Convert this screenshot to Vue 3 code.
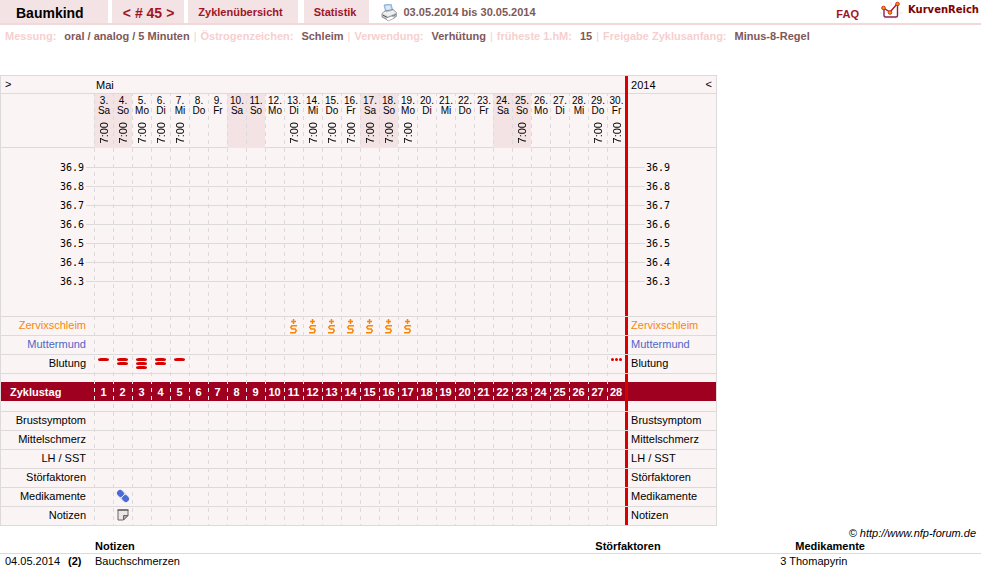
<script setup>
const weekdays = ['Sa', 'So', 'Mo', 'Di', 'Mi', 'Do', 'Fr']
const timed = [1, 2, 3, 4, 5, 11, 12, 13, 14, 15, 16, 17, 23, 27, 28]
const bleeding = { 1: 1, 2: 2, 3: 3, 4: 2, 5: 1 }

const days = Array.from({ length: 28 }, (_, i) => ({
  cycle: i + 1,
  date: i + 3,
  weekday: weekdays[i % 7],
  weekend: i % 7 < 2,
  time: timed.includes(i + 1) ? '7:00' : '',
  mucus: i + 1 >= 11 && i + 1 <= 17,
  bars: bleeding[i + 1] || 0,
  spotting: i + 1 === 28
}))

const temperatures = ['36.9', '36.8', '36.7', '36.6', '36.5', '36.4', '36.3']

const upperRows = [
  { label: 'Zervixschleim', kind: 'mucus' },
  { label: 'Muttermund', kind: 'cervix' },
  { label: 'Blutung', kind: 'bleeding' }
]
const lowerRows = [
  { label: 'Brustsymptom', kind: 'plain' },
  { label: 'Mittelschmerz', kind: 'plain' },
  { label: 'LH / SST', kind: 'plain' },
  { label: 'Störfaktoren', kind: 'plain' },
  { label: 'Medikamente', kind: 'pill' },
  { label: 'Notizen', kind: 'note' }
]

const settings = [
  { name: 'Messung:', value: 'oral / analog / 5 Minuten' },
  { name: 'Östrogenzeichen:', value: 'Schleim' },
  { name: 'Verwendung:', value: 'Verhütung' },
  { name: 'früheste 1.hM:', value: '15' },
  { name: 'Freigabe Zyklusanfang:', value: 'Minus-8-Regel' }
]
</script>

<template>
  <div class="page">
    <header class="top">
      <nav class="nav">
        <a class="tab user" href="#">Baumkind</a>
        <span class="tab cycle"><a href="#">&lt;</a> # 45 <a href="#">&gt;</a></span>
        <a class="tab overview" href="#">Zyklenübersicht</a>
        <a class="tab stats" href="#">Statistik</a>
      </nav>
      <button class="print" type="button" aria-label="Drucken">
        <svg width="16" height="18" viewBox="0 0 16 18">
          <path d="M3 1 10 0l2 7-7 2z" fill="#a9cdf0" stroke="#7e9cc0" stroke-width=".7" />
          <path d="M4.3 2.2l4.7-.6 1.4 5-4.4 1z" fill="#d8ebfc" />
          <path d="M1 9.5 4 7l8-1.5 3.3 3v4L7 16.3 1 13z" fill="#c9cbd0" stroke="#777b82" stroke-width=".8" />
          <path d="M1.3 9.6 7 12.2l8-3.4-3-2.6-1 .9-5.6 1.4-1-1z" fill="#eef0f2" />
          <path d="M2 11.2 7 13.8l7.6-3.2" fill="none" stroke="#555a60" stroke-width="1" />
          <path d="M4.5 14.3 11 12l3 1.8L7.2 17z" fill="#fff" stroke="#888" stroke-width=".6" />
          <path d="M11.8 11.5h1.6" stroke="#62b53c" stroke-width="1.2" />
        </svg>
      </button>
      <span class="range">03.05.2014 bis 30.05.2014</span>
      <a class="faq" href="#">FAQ</a>
      <a class="brand" href="#">
        <svg width="23" height="18" viewBox="0 0 23 18">
          <path d="M2 12H0M18.500 12H23M4 17.500h1M11 17.500h1M15 17.500h1M11 1v4" stroke="#e8e4e8" />
          <path d="M4 7v7.500q0 1.500 1.500 1.500h10.500q1.500 0 1.500-1.500V4" fill="none" stroke="#8f1f4c" stroke-width="1.400" />
          <path d="M3.500 7l6.500 4 7-8" fill="none" stroke="#a81a30" stroke-width="1.400" />
          <circle cx="3.500" cy="7" r="1.800" fill="#f79a00" stroke="#c8321c" />
          <circle cx="10" cy="11.500" r="1.800" fill="#f79a00" stroke="#c8321c" />
          <circle cx="17.500" cy="3" r="1.800" fill="#f79a00" stroke="#c8321c" />
        </svg>
        <span>KurvenReich</span>
      </a>
    </header>

    <div class="settings">
      <template v-for="(s, i) in settings" :key="s.name">
        <span v-if="i" class="bar">|</span>
        <span class="name">{{ s.name }}</span>
        <span class="value">{{ s.value }}</span>
      </template>
    </div>

    <div class="chart">
      <table class="grid">
        <colgroup>
          <col class="c-label" />
          <col v-for="d in days" :key="d.cycle" :class="d.cycle === 28 ? 'c-last' : 'c-day'" />
          <col class="c-right" />
        </colgroup>
        <tbody>
          <tr class="month">
            <td class="prev"><a href="#">&gt;</a></td>
            <td class="month-name" colspan="28">Mai</td>
            <td class="right over">
              <span class="year"><span>2014</span><a class="next" href="#">&lt;</a></span>
            </td>
          </tr>
          <tr class="dates">
            <td></td>
            <td v-for="d in days" :key="d.cycle" :class="{ weekend: d.weekend }">
              <div class="date">
                <span>{{ d.date }}.</span>
                <span>{{ d.weekday }}</span>
                <span class="time">{{ d.time }}</span>
              </div>
            </td>
            <td class="right over"></td>
          </tr>
          <tr class="pad-top">
            <td colspan="29"></td>
            <td class="right plain"></td>
          </tr>
          <tr v-for="t in temperatures" :key="t" class="temp">
            <th scope="row">{{ t }}</th>
            <td colspan="28"></td>
            <td class="right">{{ t }}</td>
          </tr>
          <tr class="pad-bottom">
            <td colspan="29"></td>
            <td class="right"></td>
          </tr>
          <tr v-for="r in upperRows" :key="r.label" class="row" :class="r.kind">
            <th scope="row">{{ r.label }}</th>
            <td v-for="d in days" :key="d.cycle">
              <span v-if="r.kind === 'mucus' && d.mucus" class="mark">
                <svg width="9" height="15" viewBox="0 0 9 15">
                  <path d="M2 2.500h5M4.500 0v5M8 6.750H3L1.750 8.250 3 10H6.250L7.250 11.750 6 13.750H1" fill="none" stroke="#f98500" stroke-width="1.500" />
                </svg>
              </span>
              <span v-if="r.kind === 'bleeding' && d.bars" class="bars">
                <i v-for="n in d.bars" :key="n"></i>
              </span>
              <span v-if="r.kind === 'bleeding' && d.spotting" class="dots"><i></i><i></i><i></i></span>
            </td>
            <td class="right">{{ r.label }}</td>
          </tr>
          <tr class="gap-a">
            <td colspan="29"></td>
            <td class="right plain"></td>
          </tr>
          <tr class="band">
            <th scope="row">Zyklustag</th>
            <td v-for="d in days" :key="d.cycle">{{ d.cycle }}</td>
            <td class="right"></td>
          </tr>
          <tr class="gap-b">
            <td colspan="29"></td>
            <td class="right"></td>
          </tr>
          <tr v-for="r in lowerRows" :key="r.label" class="row" :class="r.kind">
            <th scope="row">{{ r.label }}</th>
            <td v-for="d in days" :key="d.cycle">
              <span v-if="d.cycle === 2 && r.kind === 'pill'" class="mark">
                <svg width="14" height="14" viewBox="0 0 14 14">
                  <path d="M4.500 4.500l5 5" stroke="#b9c9f2" stroke-width="7" stroke-linecap="round" />
                  <path d="M4 4l.8.800M9.200 9.200l.8.800" stroke="#4a6cd6" stroke-width="6" stroke-linecap="round" />
                  <path d="M5 9l4-4" stroke="#e6edfb" stroke-width="1" />
                </svg>
              </span>
              <span v-if="d.cycle === 2 && r.kind === 'note'" class="mark">
                <svg width="12" height="12" viewBox="0 0 12 12">
                  <path d="M1 1h10v5.500L6.500 11H1z" fill="#ece6e6" stroke="#6f6767" />
                  <path d="M.5 1h11" stroke="#6f6767" stroke-width="1.500" />
                  <path d="M6.500 11V6.500H11z" fill="#b3abab" stroke="#6f6767" />
                </svg>
              </span>
            </td>
            <td class="right">{{ r.label }}</td>
          </tr>
        </tbody>
      </table>
      <div class="dashes"></div>
    </div>

    <div class="source">© http://www.nfp-forum.de</div>

    <table class="notes">
      <colgroup>
        <col class="n-date" /><col class="n-day" /><col class="n-note" /><col class="n-dis" /><col />
      </colgroup>
      <thead>
        <tr>
          <td></td>
          <td></td>
          <th scope="col">Notizen</th>
          <th scope="col">Störfaktoren</th>
          <th scope="col" class="med">Medikamente</th>
        </tr>
      </thead>
      <tbody>
        <tr>
          <td class="date-cell">04.05.2014</td>
          <td><b>(2)</b></td>
          <td>Bauchschmerzen</td>
          <td></td>
          <td>3 Thomapyrin</td>
        </tr>
      </tbody>
    </table>
  </div>
</template>

<style>
body {
  background: #fff;
}
</style>

<style scoped>
.page {
  --line: #dcdada;
  --red: #d90000;
  --wine: #a00020;
  font: 11px/13px "Liberation Sans", Arial, sans-serif;
  color: #000;
}
a {
  color: inherit;
  text-decoration: none;
}
.top {
  display: flex;
  align-items: center;
  height: 23px;
  border-bottom: 2px solid #f3d8da;
  font-weight: bold;
  color: #805858;
}
.nav {
  display: flex;
  gap: 4px;
  height: 23px;
}
.tab {
  display: flex;
  align-items: center;
  background: #f3e3e5;
  color: #a01525;
  padding: 2px 10px 0;
  box-sizing: border-box;
}
.user {
  padding: 3px 24px 0 16px;
  color: #000;
  font-size: 14px;
}
.cycle {
  padding: 3px 10px 0 11px;
  gap: 4px;
  font-size: 14px;
}
.overview {
  padding-right: 15px;
}
.stats {
  margin-left: 2px;
  padding-right: 13px;
}
.print {
  margin: 0 6px 0 12px;
  padding: 2px 0 0;
  border: 0;
  background: none;
  line-height: 0;
}
.range {
  padding-top: 2px;
}
.faq {
  margin-left: auto;
  padding-top: 5px;
  color: #a01525;
}
.brand {
  display: flex;
  align-items: center;
  gap: 5px;
  margin-left: 21px;
  padding: 0 2px 3px 0;
  font: bold 10px/12px "DejaVu Sans", sans-serif;
  color: #800000;
}
.brand svg {
  display: block;
}
.settings {
  display: flex;
  padding: 5px 5px 0;
  font-weight: bold;
  color: #f7cfcf;
  white-space: nowrap;
}
.value {
  margin-left: 8px;
  color: #805858;
}
.bar {
  margin: 0 4px;
  font-weight: normal;
}
.chart {
  position: relative;
  width: max-content;
  margin-top: 32px;
  background: #faf4f4;
}
.grid {
  table-layout: fixed;
  width: 717px;
  border-collapse: separate;
  border-spacing: 0;
  border: 1px solid var(--line);
  border-bottom: 0;
  box-sizing: border-box;
}
.grid td,
.grid th {
  box-sizing: border-box;
  padding: 0;
  font-weight: normal;
  background: linear-gradient(var(--line), var(--line)) bottom / 100% 1px no-repeat;
}
.c-label { width: 93px; }
.c-day { width: 19px; }
.c-last { width: 18px; }
.c-right { width: 91px; }

.grid .right {
  padding-left: 6px;
  background:
    linear-gradient(var(--line), var(--line)) bottom / 100% 1px no-repeat,
    linear-gradient(var(--red), var(--red)) left / 3px 100% no-repeat;
}
.grid .right.over {
  background:
    linear-gradient(var(--red), var(--red)) left / 3px 100% no-repeat,
    linear-gradient(var(--line), var(--line)) bottom / 100% 1px no-repeat;
}
.grid .right.plain {
  background: linear-gradient(var(--red), var(--red)) left / 3px 100% no-repeat;
}
.month td {
  height: 18px;
}
.grid .prev {
  padding: 0 0 2px 4px;
}
.grid .month-name {
  padding: 1px 0 0 2px;
}
.year {
  display: flex;
  justify-content: space-between;
  padding: 1px 4px 0 0;
}
.next {
  padding-bottom: 2px;
  line-height: 11px;
}
.dates td {
  height: 54px;
}
.grid .weekend {
  background: #f3e3e5;
}
.date {
  display: grid;
  grid-template-rows: 10px 10px 32px;
  justify-items: center;
  padding: 1px 0 0 1px;
  font-size: 10px;
  line-height: 10px;
}
.time {
  align-self: end;
  padding-top: 4px;
  writing-mode: vertical-rl;
  transform: rotate(180deg);
  font-size: 11px;
}
.pad-top td {
  height: 10px;
}
.grid .pad-top td:first-child {
  background: none;
}
.temp td,
.temp th {
  height: 19px;
}
.grid .temp td,
.grid .temp th {
  font: 10px/19px "DejaVu Sans Mono", monospace;
  background: linear-gradient(var(--line), var(--line)) center / 100% 1px no-repeat;
}
.grid .temp th {
  padding-right: 10px;
  text-align: right;
  background-position: right center;
  background-size: 8px 1px;
}
.grid .temp .right {
  padding-left: 21px;
  background:
    linear-gradient(var(--red), var(--red)) left / 3px 100% no-repeat,
    linear-gradient(var(--line), var(--line)) left / 20px 1px no-repeat;
}
.pad-bottom td {
  height: 26px;
}
.row td,
.row th {
  height: 19px;
}
.grid .row th {
  padding: 0 8px 2px 0;
  text-align: right;
}
.grid .row .right {
  padding-bottom: 2px;
}
.mucus th,
.mucus .right {
  color: #f68712;
}
.cervix th,
.cervix .right {
  color: #4f66c8;
}
.mark {
  display: flex;
  justify-content: center;
  height: 17px;
  align-items: center;
}
.pill .mark,
.note .mark {
  height: 13px;
  padding-bottom: 3px;
}
.bars {
  display: grid;
  gap: 1px;
  height: 13px;
  align-content: start;
  justify-content: center;
}
.bars i {
  width: 11px;
  height: 3px;
  border-radius: 4px / 2px;
  background: var(--red);
}
.dots {
  display: flex;
  gap: 1px;
  height: 13px;
  justify-content: center;
}
.dots i {
  width: 3px;
  height: 3px;
  border-radius: 2px;
  background: var(--red);
}
.gap-a td {
  height: 8px;
}
.grid .gap-a td:first-child {
  background: none;
}
.grid .band td,
.grid .band th {
  position: relative;
  z-index: 1;
  height: 19px;
  padding-top: 2px;
  font-weight: bold;
  color: #fff;
  text-align: center;
  background:
    repeating-linear-gradient(#f5e6e8 0 2px, transparent 2px 6px, #f5e6e8 6px 8px) left / 1px 100% no-repeat,
    var(--wine);
}
.grid .band th {
  padding-left: 9px;
  text-align: left;
  background: var(--wine);
}
.grid .band .right {
  background: linear-gradient(var(--red), var(--red)) left / 3px 100% no-repeat, var(--wine);
}
.gap-b td {
  height: 11px;
}
.grid .row.mucus th,
.grid .row.mucus .right {
  background-color: transparent;
}
.grid .bleeding td,
.grid .bleeding th {
  background-position: bottom, left;
}
.dashes {
  position: absolute;
  top: 1px;
  bottom: 1px;
  left: 94px;
  right: 92px;
  margin-top: 18px;
  pointer-events: none;
  background: repeating-linear-gradient(90deg, var(--line) 0 1px, transparent 1px 19px);
  mask-image: repeating-linear-gradient(#000 0 2px, transparent 2px 6px, #000 6px 8px);
}
.source {
  padding: 1px 5px 0 0;
  text-align: right;
  font-style: italic;
}
.notes {
  table-layout: fixed;
  width: 100%;
  border-collapse: collapse;
}
.notes td,
.notes th {
  height: 13px;
  padding: 0;
  text-align: left;
}
.notes thead td,
.notes thead th {
  border-bottom: 1px solid var(--line);
}
.notes tbody td {
  padding-top: 1px;
}
.n-date { width: 68px; }
.n-day { width: 27px; }
.n-note { width: 51%; }
.n-dis { width: 185px; }
.notes .date-cell {
  padding-left: 5px;
}
.notes .med {
  padding-left: 15px;
}
</style>
